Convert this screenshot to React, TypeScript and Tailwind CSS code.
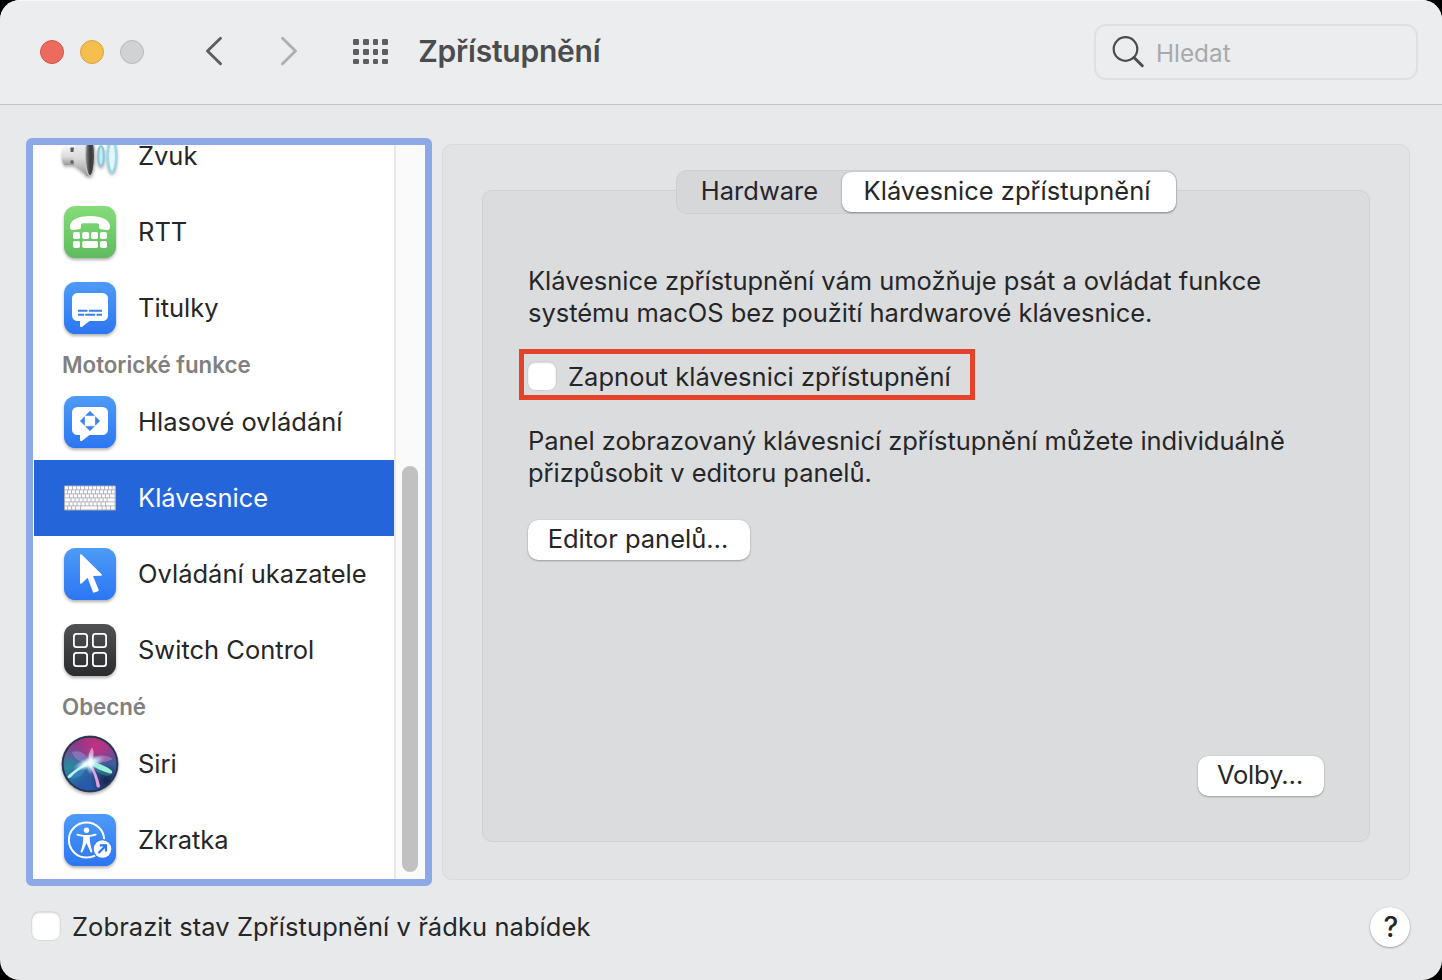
import type { ReactNode } from "react";

const ICON_SHADOW = "shrink-0 drop-shadow-[0_2px_1.5px_rgba(0,0,0,0.3)]";

function Tile({ id, from, to, children }: { id: string; from: string; to: string; children: ReactNode }) {
  return (
    <svg width="52" height="52" viewBox="0 0 52 52" className={ICON_SHADOW}>
      <defs>
        <linearGradient id={id} x1="0" y1="0" x2="0" y2="1">
          <stop offset="0" stopColor={from} />
          <stop offset="1" stopColor={to} />
        </linearGradient>
      </defs>
      <rect width="52" height="52" rx="11.5" fill={`url(#${id})`} />
      {children}
    </svg>
  );
}

function SoundIcon() {
  return (
    <svg width="58" height="52" viewBox="0 0 58 52" className={ICON_SHADOW}>
      <defs>
        <linearGradient id="cone" x1="0" y1="0" x2="0" y2="1">
          <stop offset="0" stopColor="#f4f4f4" />
          <stop offset="0.55" stopColor="#dcdcdc" />
          <stop offset="1" stopColor="#989898" />
        </linearGradient>
        <linearGradient id="mouth" x1="0" y1="0" x2="1" y2="0">
          <stop offset="0" stopColor="#8f8f8f" />
          <stop offset="0.5" stopColor="#3a3a3a" />
          <stop offset="1" stopColor="#4a4a4a" />
        </linearGradient>
      </defs>
      <path d="M3.500 17h11v18h-11C1.500 33 1 29.500 1 26s.5-7 2.500-9z" fill="url(#cone)" />
      <path d="M9.500 17.500h4v4.500h-4z M9.500 30.500h4v3h-4z" fill="#5a5a5a" />
      <path d="M13 17C18 13 22 9 26 6h3v40h-3c-4-4-8-8-13-11-1-6-1-12 0-18z" fill="url(#cone)" />
      <ellipse cx="29" cy="26" rx="4.600" ry="19.500" fill="url(#mouth)" stroke="#c4c4c4" strokeWidth="1.200" />
      <ellipse cx="40" cy="26" rx="2.800" ry="10" fill="#c4eaf2" stroke="#84cbdb" strokeWidth="2" />
      <ellipse cx="51" cy="26" rx="4.200" ry="15.800" fill="#e4f6fa" stroke="#9cd9e6" strokeWidth="2.600" />
    </svg>
  );
}

function RttIcon() {
  return (
    <Tile id="rtt" from="#85dd78" to="#5fbb5e">
      <path
        d="M6 20.500C6 13.500 15 10 26 10s20 3.500 20 10.500c0 2.500-.8 3.700-2.800 3.500l-6.200-.8c-1.500-.2-2-.9-2-2.200v-1.700c0-1.500-1-2-3-2h-12c-2 0-3 .5-3 2V21c0 1.300-.5 2-2 2.200L8.800 24C6.800 24.200 6 23 6 20.500z"
        fill="#fff"
      />
      <g fill="#fff">
        <rect x="9" y="26" width="7" height="7" rx="1.800" />
        <rect x="18.200" y="26" width="7" height="7" rx="1.800" />
        <rect x="27" y="26" width="7" height="7" rx="1.800" />
        <rect x="36" y="26" width="7" height="7" rx="1.800" />
        <rect x="9" y="35" width="7" height="7" rx="1.800" />
        <rect x="18.200" y="35" width="15.800" height="7" rx="1.800" />
        <rect x="36" y="35" width="7" height="7" rx="1.800" />
      </g>
    </Tile>
  );
}

const BUBBLE =
  "M13.500 11h25a5.500 5.500 0 0 1 5.500 5.500v17a5.500 5.500 0 0 1-5.500 5.500H25.500l-7.300 5.700c-1.200.8-2.200.4-2.200-1V39h-2.500A5.500 5.500 0 0 1 8 33.500v-17A5.500 5.500 0 0 1 13.500 11z";

function CaptionsIcon() {
  return (
    <Tile id="captions" from="#4d9bf7" to="#2d76f3">
      <path d={BUBBLE} fill="#fff" />
      <path d="M14 28.700h9.500M25 28.700h13M14 32.700h6M21.200 32.700h10M32.500 32.700h5.500" stroke="#3a7ff0" strokeWidth="1.900" />
    </Tile>
  );
}

function VoiceIcon() {
  return (
    <Tile id="voice" from="#4d9bf7" to="#2d76f3">
      <path d={BUBBLE} fill="#fff" />
      <g fill="#3a82f3" stroke="#3a82f3" strokeWidth="0.600" strokeLinejoin="round">
        <path d="M26 15.300l4.300 4.300h-8.600z" />
        <path d="M26 34.700l4.300-4.300h-8.600z" />
        <path d="M16.300 25l4.300-4.300v8.600z" />
        <path d="M35.700 25l-4.300-4.300v8.600z" />
      </g>
    </Tile>
  );
}

const KEY_ROWS = [
  [5, 9, 13, 17, 21, 25, 29, 33, 37, 41, 45, 48.5],
  [4, 8, 12, 16, 20, 24, 28, 32, 36, 40, 44, 48],
  [6, 10, 14, 18, 22, 26, 30, 34, 38, 42, 46],
  [7.500, 11.500, 15.500, 19.500, 23.500, 27.500, 31.500, 35.500, 39.500, 43.500],
  [5.500, 9.500, 13.500, 17.500, 21.500, 25.500, 29.500, 33.500, 37.500, 42],
  [4, 8, 12, 17, 34, 38.500, 42.500, 47],
];

function KeyboardIcon() {
  return (
    <svg width="52" height="26" viewBox="0 0 52 26" className="shrink-0">
      <rect x="0" y="0.500" width="52" height="25" rx="1" fill="#a9a9ae" />
      {KEY_ROWS.map((row, i) => {
        const edges = [1, ...row, 51.500];
        return edges.slice(0, -1).map((x, j) => (
          <rect key={`${i}-${j}`} x={x} y={1.2 + i * 4} width={edges[j + 1] - x - 0.8} height="3.200" rx="0.300" fill="#fafafc" />
        ));
      })}
    </svg>
  );
}

function PointerIcon() {
  return (
    <Tile id="pointer" from="#4d9bf7" to="#2d76f3">
      <path
        d="M16 7.200v27.600c0 1 .9 1.300 1.600.6l6-5.700 5.200 14.100c.3.800 1 1.100 1.700.8l3.400-1.300c.8-.3 1-.9.700-1.700L29 28l8-.3c1 0 1.300-.8.600-1.500L17.600 6.500c-.7-.7-1.600-.3-1.600.7z"
        fill="#fff"
      />
    </Tile>
  );
}

function SwitchIcon() {
  return (
    <Tile id="switch" from="#505153" to="#2b2c2e">
      <g fill="none" stroke="#fff" strokeWidth="1.800">
        <rect x="9.900" y="9.900" width="13.200" height="13.200" rx="2.600" />
        <rect x="28.900" y="9.900" width="13.200" height="13.200" rx="2.600" />
        <rect x="9.900" y="28.900" width="13.200" height="13.200" rx="2.600" />
        <rect x="28.900" y="28.900" width="13.200" height="13.200" rx="2.600" />
      </g>
    </Tile>
  );
}

function SiriIcon() {
  return (
    <svg width="58" height="58" viewBox="0 0 58 58" className={ICON_SHADOW}>
      <defs>
        <linearGradient id="siriBase" x1="0.450" y1="0" x2="0.500" y2="1">
          <stop offset="0" stopColor="#963283" />
          <stop offset="0.300" stopColor="#7d4594" />
          <stop offset="0.550" stopColor="#33609c" />
          <stop offset="1" stopColor="#2358ae" />
        </linearGradient>
        <radialGradient id="siriPink" cx="0.620" cy="0.150" r="0.380">
          <stop offset="0" stopColor="#c93080" stopOpacity="0.900" />
          <stop offset="1" stopColor="#c93080" stopOpacity="0" />
        </radialGradient>
        <radialGradient id="siriTeal" cx="0.100" cy="0.560" r="0.400">
          <stop offset="0" stopColor="#2a8fa0" stopOpacity="0.900" />
          <stop offset="1" stopColor="#2a8fa0" stopOpacity="0" />
        </radialGradient>
        <radialGradient id="siriDark" cx="0.820" cy="0.820" r="0.320">
          <stop offset="0" stopColor="#141b3c" stopOpacity="0.850" />
          <stop offset="1" stopColor="#141b3c" stopOpacity="0" />
        </radialGradient>
        <radialGradient id="siriGlow">
          <stop offset="0" stopColor="#fff" />
          <stop offset="0.350" stopColor="#f0fdff" stopOpacity="0.900" />
          <stop offset="1" stopColor="#a0e4ff" stopOpacity="0" />
        </radialGradient>
      </defs>
      <circle cx="29" cy="29" r="28.500" fill="#4a5a70" />
      <circle cx="29" cy="29" r="26.500" fill="url(#siriBase)" />
      <circle cx="29" cy="29" r="26.500" fill="url(#siriTeal)" />
      <circle cx="29" cy="29" r="26.500" fill="url(#siriPink)" />
      <circle cx="29" cy="29" r="26.500" fill="url(#siriDark)" />
      <path d="M11 17c8-3 15 2 18 11-8 0-16-3-18-11z" fill="#b79be0" opacity="0.400" />
      <path d="M29 28c5-8 14-10 23-4-6 3-15 5-23 4z" fill="#d79bd4" opacity="0.400" />
      <path d="M28 28L7 42c8 4 16-1 21-14z" fill="#4fa8ee" opacity="0.300" />
      <path d="M29 28l22 10c-1 5-14 4-22-10z" fill="#39b89c" opacity="0.350" />
      <path d="M31 12.500c2.500 4 2 9-1.500 15.500-3-5-1.500-11 1.500-15.500z" fill="#f9b3dd" opacity="0.750" />
      <path d="M29 26C19 31 11 36.500 6.500 41.500c.5 2 2 2 3.500.5C14.500 37 21 32.500 29 30z" fill="#c4faf8" opacity="0.950" />
      <path d="M28 26c9 1.500 17 5 22.500 9.500 1.500 2 .5 3.500-1.500 3-7-2-14-5-20-9z" fill="#a4f5dc" opacity="0.950" />
      <path d="M26.500 28c5 7 8 15 9 23 .5 2 3 2 3.500 0C37.500 43 34 35 30 28z" fill="#f3a3dc" opacity="0.950" />
      <ellipse cx="28" cy="28" rx="17" ry="6" fill="url(#siriGlow)" transform="rotate(-20 28 28)" />
      <ellipse cx="29.500" cy="28" rx="5" ry="12" fill="url(#siriGlow)" opacity="0.850" />
      <circle cx="29" cy="29" r="27.200" fill="none" stroke="#26304c" strokeWidth="1.400" />
    </svg>
  );
}

function ShortcutIcon() {
  return (
    <Tile id="shortcut" from="#4d9bf7" to="#2d76f3">
      <circle cx="22.500" cy="26" r="17.600" fill="none" stroke="#fff" strokeWidth="2" />
      <circle cx="22.500" cy="16.200" r="2.700" fill="#fff" />
      <path
        d="M13.300 19.700c3 .9 6 1.300 9.200 1.300s6.200-.4 9.200-1.300c1-.2 1.300 1.300.2 1.700-2 .6-4 1-6.200 1.300 0 5 .8 9.500 2.600 14.600.4 1.200-1.300 1.800-1.800.6L22.500 29l-4 8.900c-.5 1.200-2.200.6-1.800-.6 1.800-5.100 2.600-9.600 2.600-14.600-2.200-.3-4.200-.7-6.200-1.300-1.100-.4-.8-1.900.2-1.700z"
        fill="#fff"
      />
      <circle cx="38.500" cy="35" r="10" fill="#3179f3" />
      <circle cx="38.500" cy="35" r="8.800" fill="#fff" />
      <path d="M34.500 39l7-7M35.800 31.400h6.200v6.200" fill="none" stroke="#2d76f3" strokeWidth="2.200" />
    </Tile>
  );
}

function Row({ icon, selected, children }: { icon: ReactNode; selected?: boolean; children: ReactNode }) {
  return (
    <div
      className={
        selected
          ? "flex h-[76px] shrink-0 items-center bg-[#2465d9] text-white"
          : "flex h-[76px] shrink-0 items-center"
      }
    >
      <div className="ml-[26px] flex w-[60px] justify-center">{icon}</div>
      <div className="ml-[18px]">{children}</div>
    </div>
  );
}

function Heading({ children }: { children: ReactNode }) {
  return (
    <div className="flex h-[38px] shrink-0 items-center pb-px pl-7 text-[22.300px] font-semibold text-[#808080]">
      {children}
    </div>
  );
}

function Checkbox() {
  return (
    <span className="size-7 shrink-0 rounded-[7px] bg-white shadow-[inset_0_1px_2px_rgba(0,0,0,0.16),0_0_0_0.5px_rgba(0,0,0,0.12)]" />
  );
}

const BUTTON =
  "flex h-10 items-center justify-center rounded-[10px] bg-white shadow-[0_1px_2px_rgba(0,0,0,0.28),0_0_1px_rgba(0,0,0,0.25)]";

function Toolbar() {
  return (
    <header className="flex h-[105px] shrink-0 items-start border-b border-[#c3c4c6] bg-[#ecedef] shadow-[inset_0_1px_0_#f8f8f9]">
      <div className="mt-10 ml-10 flex gap-4">
        <span className="size-6 rounded-full border border-[#d4554b] bg-[#ec6a5e]" />
        <span className="size-6 rounded-full border border-[#d9a23f] bg-[#f4bf4f]" />
        <span className="size-6 rounded-full border border-[#b8b9ba] bg-[#d1d2d3]" />
      </div>
      <svg width="18" height="30" viewBox="0 0 18 30" className="mt-9 ml-[61px]" fill="none" stroke="#5d5e60" strokeWidth="2.900" strokeLinecap="round" strokeLinejoin="round">
        <path d="M15.500 2.300L2.500 15l13 12.700" />
      </svg>
      <svg width="18" height="30" viewBox="0 0 18 30" className="mt-9 ml-[57px]" fill="none" stroke="#aeafb1" strokeWidth="2.900" strokeLinecap="round" strokeLinejoin="round">
        <path d="M2.500 2.300L15.500 15l-13 12.700" />
      </svg>
      <div className="mt-[39px] ml-[55px] grid grid-cols-4 gap-x-1 gap-y-1">
        {Array.from({ length: 12 }, (_, i) => (
          <span key={i} className="size-[5.800px] rounded-[1.200px] bg-[#5d5e60]" />
        ))}
      </div>
      <h1 className="mt-[31px] ml-[30px] text-[30px] leading-10 font-semibold tracking-[-0.22px] text-[#4b4c4e]">Zpřístupnění</h1>
      <div className="mt-6 mr-6 ml-auto flex h-14 w-[324px] items-center rounded-xl border-2 border-[#dfe0e2] pl-[15px]">
        <svg width="34" height="34" viewBox="0 0 34 34" fill="none" stroke="#4b4c4e" strokeLinecap="round">
          <circle cx="14.500" cy="14" r="11.800" strokeWidth="2.200" />
          <path d="M23 22.500l8.300 8.300" strokeWidth="3" />
        </svg>
        <span className="mt-0.5 ml-[11px] text-[24.300px] text-[#a8a9ab]">Hledat</span>
      </div>
    </header>
  );
}

function Sidebar() {
  return (
    <div className="flex h-[748px] w-[406px] shrink-0 rounded-[6px] border-[7px] border-[#8aa9e6] bg-white pl-px">
      <div className="flex w-[360px] flex-col justify-end overflow-hidden pb-px">
        <Row icon={<SoundIcon />}>Zvuk</Row>
        <Row icon={<RttIcon />}>RTT</Row>
        <Row icon={<CaptionsIcon />}>Titulky</Row>
        <Heading>Motorické funkce</Heading>
        <Row icon={<VoiceIcon />}>Hlasové ovládání</Row>
        <Row icon={<KeyboardIcon />} selected>Klávesnice</Row>
        <Row icon={<PointerIcon />}>Ovládání ukazatele</Row>
        <Row icon={<SwitchIcon />}>Switch Control</Row>
        <Heading>Obecné</Heading>
        <Row icon={<SiriIcon />}>Siri</Row>
        <Row icon={<ShortcutIcon />}>Zkratka</Row>
      </div>
      <div className="flex flex-1 items-end border-l-2 border-[#e8e8e8] bg-[#fafafa] pb-[7px] pl-1.5">
        <div className="h-[406px] w-4 rounded-full bg-[#c1c1c1]" />
      </div>
    </div>
  );
}

function Panel() {
  return (
    <main className="mt-1.5 flex h-[736px] w-[968px] flex-col items-center rounded-[10px] border border-[#d9dadb] bg-[#e2e3e5] pt-[25px]">
      <div className="z-10 -mb-6 ml-px flex h-11 w-[501px] items-center rounded-[11px] border border-[#cdced0] bg-[#d6d7d9]">
        <div className="flex-1 pb-0.5 text-center">Hardware</div>
        <div className="flex h-10 w-[334px] items-center justify-center rounded-[9px] bg-white pr-1 pb-0.5 shadow-[0_1px_2px_rgba(0,0,0,0.35),0_0_1px_rgba(0,0,0,0.3)]">
          Klávesnice zpřístupnění
        </div>
      </div>
      <section className="flex h-[652px] w-[888px] flex-col items-start rounded-[10px] border border-[#d0d1d3] bg-[#dbdcde] pt-[74px] pl-[45px]">
        <p className="leading-8 tracking-[-0.030px]">
          Klávesnice zpřístupnění vám umožňuje psát a ovládat funkce
          <br />
          systému macOS bez použití hardwarové klávesnice.
        </p>
        <label className="mt-5 -ml-[9px] flex h-[51px] w-[456px] items-center border-[5px] border-[#e4432a] pl-1">
          <span className="mt-0.5 flex">
            <Checkbox />
          </span>
          <span className="ml-3 pt-[5px] tracking-[0.030px]">Zapnout klávesnici zpřístupnění</span>
        </label>
        <p className="mt-[25px] leading-8 tracking-[-0.030px]">
          Panel zobrazovaný klávesnicí zpřístupnění můžete individuálně
          <br />
          přizpůsobit v editoru panelů.
        </p>
        <button className={`${BUTTON} mt-[31px] w-[222px] pr-0.5 pb-0.5`}>Editor panelů…</button>
        <button className={`${BUTTON} mt-auto mr-[45px] mb-[45px] w-[126px] self-end pr-0.5 pb-0.5 tracking-[-0.2px]`}>Volby…</button>
      </section>
    </main>
  );
}

export default function App() {
  return (
    <div className="bg-black">
      <div className="flex h-[980px] w-[1442px] flex-col overflow-hidden rounded-[20px] bg-[#e8e9eb] font-['Inter',sans-serif] text-[25.500px] leading-8 whitespace-nowrap text-[#262628]">
        <Toolbar />
        <div className="flex gap-[10px] pt-[33px] pl-[26px]">
          <Sidebar />
          <Panel />
        </div>
        <footer className="flex items-center justify-between pt-[21px] pr-8 pl-8">
          <label className="flex items-center gap-3 pb-0.5">
            <Checkbox />
            <span className="pt-0.5 tracking-[0.070px]">Zobrazit stav Zpřístupnění v řádku nabídek</span>
          </label>
          <button className="flex size-10 items-center justify-center rounded-full bg-white pl-0.5 text-[28px] font-medium shadow-[0_1px_2px_rgba(0,0,0,0.28),0_0_1px_rgba(0,0,0,0.25)]">
            ?
          </button>
        </footer>
      </div>
    </div>
  );
}
